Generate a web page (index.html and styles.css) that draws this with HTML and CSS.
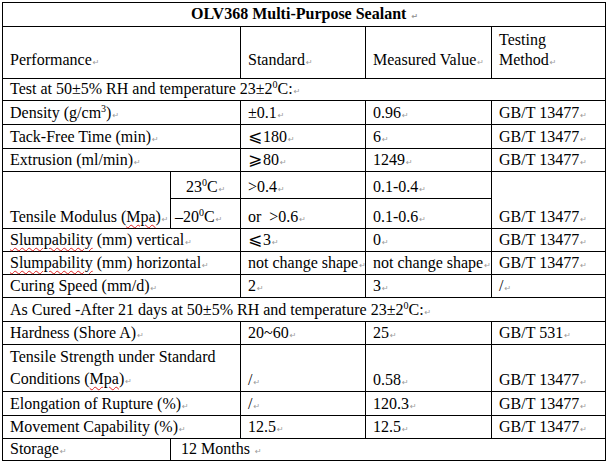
FILE: index.html
```html
<!DOCTYPE html>
<html>
<head>
<meta charset="utf-8">
<link rel="stylesheet" href="styles.css">
</head>
<body>
<table class="spec">
  <colgroup>
    <col class="c1"><col class="c2"><col class="c3"><col class="c4"><col class="c5">
  </colgroup>
  <tr class="h-title">
    <td colspan="5" class="title">OLV368 Multi-Purpose Sealant <span class="pm">↵</span></td>
  </tr>
  <tr class="h-head">
    <td colspan="2" class="head">Performance<span class="pm">↵</span></td>
    <td class="head">Standard<span class="pm">↵</span></td>
    <td class="head nw">Measured Value<span class="pm">↵</span></td>
    <td class="head">Testing<br>Method<span class="pm">↵</span></td>
  </tr>
  <tr class="h-21">
    <td colspan="5">Test at 50±5% RH and temperature 23±2<sup>0</sup>C:<span class="pm">↵</span></td>
  </tr>
  <tr class="h-24">
    <td colspan="2">Density (g/cm<sup>3</sup>)<span class="pm">↵</span></td>
    <td>±0.1<span class="pm">↵</span></td>
    <td>0.96<span class="pm">↵</span></td>
    <td>GB/T 13477<span class="pm">↵</span></td>
  </tr>
  <tr class="h-24">
    <td colspan="2">Tack-Free Time (min)<span class="pm">↵</span></td>
    <td><span class="sym">⩽</span>180<span class="pm">↵</span></td>
    <td>6<span class="pm">↵</span></td>
    <td>GB/T 13477<span class="pm">↵</span></td>
  </tr>
  <tr class="h-23">
    <td colspan="2">Extrusion (ml/min)<span class="pm">↵</span></td>
    <td><span class="sym">⩾</span>80<span class="pm">↵</span></td>
    <td>1249<span class="pm">↵</span></td>
    <td>GB/T 13477<span class="pm">↵</span></td>
  </tr>
  <tr class="h-27">
    <td rowspan="2">Tensile Modulus (<span class="sp">Mpa</span>)<span class="pm">↵</span></td>
    <td class="temp-a">23<sup>0</sup>C<span class="pm">↵</span></td>
    <td>&gt;0.4<span class="pm">↵</span></td>
    <td>0.1-0.4<span class="pm">↵</span></td>
    <td rowspan="2">GB/T 13477<span class="pm">↵</span></td>
  </tr>
  <tr class="h-30">
    <td class="temp-b">–20<sup>0</sup>C<span class="pm">↵</span></td>
    <td>or&nbsp;&nbsp;&gt;0.6<span class="pm">↵</span></td>
    <td>0.1-0.6<span class="pm">↵</span></td>
  </tr>
  <tr class="h-23">
    <td colspan="2"><span class="sp">Slumpability</span> (mm) vertical<span class="pm">↵</span></td>
    <td><span class="sym">⩽</span>3<span class="pm">↵</span></td>
    <td>0<span class="pm">↵</span></td>
    <td>GB/T 13477<span class="pm">↵</span></td>
  </tr>
  <tr class="h-23">
    <td colspan="2"><span class="sp">Slumpability</span> (mm) horizontal<span class="pm">↵</span></td>
    <td class="nw">not change shape<span class="pm">↵</span></td>
    <td class="nw">not change shape<span class="pm">↵</span></td>
    <td>GB/T 13477<span class="pm">↵</span></td>
  </tr>
  <tr class="h-23">
    <td colspan="2">Curing Speed (mm/d)<span class="pm">↵</span></td>
    <td>2<span class="pm">↵</span></td>
    <td>3<span class="pm">↵</span></td>
    <td>/<span class="pm">↵</span></td>
  </tr>
  <tr class="h-24">
    <td colspan="5">As Cured -After 21 days at 50±5% RH and temperature 23±2<sup>0</sup>C:<span class="pm">↵</span></td>
  </tr>
  <tr class="h-23">
    <td colspan="2">Hardness (Shore A)<span class="pm">↵</span></td>
    <td>20~60<span class="pm">↵</span></td>
    <td>25<span class="pm">↵</span></td>
    <td>GB/T 531<span class="pm">↵</span></td>
  </tr>
  <tr class="h-47">
    <td colspan="2" class="two">Tensile Strength under Standard<br>Conditions (<span class="sp">Mpa</span>)<span class="pm">↵</span></td>
    <td>/<span class="pm">↵</span></td>
    <td>0.58<span class="pm">↵</span></td>
    <td>GB/T 13477<span class="pm">↵</span></td>
  </tr>
  <tr class="h-24">
    <td colspan="2">Elongation of Rupture (%)<span class="pm">↵</span></td>
    <td>/<span class="pm">↵</span></td>
    <td>120.3<span class="pm">↵</span></td>
    <td>GB/T 13477<span class="pm">↵</span></td>
  </tr>
  <tr class="h-23">
    <td colspan="2">Movement Capability (%)<span class="pm">↵</span></td>
    <td>12.5<span class="pm">↵</span></td>
    <td>12.5<span class="pm">↵</span></td>
    <td>GB/T 13477<span class="pm">↵</span></td>
  </tr>
  <tr class="h-22">
    <td>Storage<span class="pm">↵</span></td>
    <td colspan="4" class="months">12 Months <span class="pm">↵</span></td>
  </tr>
</table>
</body>
</html>
```
FILE: styles.css
```css
html, body {
  margin: 0;
  padding: 0;
  background: #ffffff;
}

body {
  padding: 2px 0 0 2px;
  font-family: "Liberation Serif", "Times New Roman", serif;
  font-size: 16px;
  color: #000;
}

.spec {
  border-collapse: collapse;
  table-layout: fixed;
  width: 603px;
}

.c1 { width: 168px; }
.c2 { width: 70px; }
.c3 { width: 125px; }
.c4 { width: 126px; }
.c5 { width: 114px; }

.spec td {
  border: 1px solid #000;
  padding: 0 6px 2px 7px;
  line-height: 19px;
  vertical-align: bottom;
  white-space: nowrap;
}

.h-title { height: 24px; }
.h-head { height: 52px; }
.h-21 { height: 21px; }
.h-22 { height: 22px; }
.h-23 { height: 23px; }
.h-24 { height: 24px; }
.h-27 { height: 27px; }
.h-30 { height: 30px; }
.h-47 { height: 47px; }

.spec td.title {
  text-align: center;
  font-weight: bold;
  padding-bottom: 3px;
}

.spec td.head {
  padding-bottom: 8px;
  line-height: 20px;
}

.spec td.two {
  line-height: 22px;
  padding-bottom: 1px;
}

.spec td.temp-a {
  padding-left: 15px;
}

.spec td.temp-b {
  padding-left: 4px;
}

.spec td.months {
  padding-left: 10px;
}

.nw { white-space: nowrap; }

sup {
  font-size: 10px;
  line-height: 0;
  vertical-align: 6px;
}

.pm {
  font-family: "DejaVu Sans", sans-serif;
  font-size: 8px;
  line-height: 0;
  color: #9a9a9a;
  margin-left: 1px;
}

.sym {
  font-family: "DejaVu Sans", sans-serif;
  font-size: 17px;
  line-height: 0;
  display: inline-block;
  width: 15px;
}

.sp {
  text-decoration: underline wavy #e02020;
  text-decoration-thickness: 1px;
  text-underline-offset: 2px;
}
```
